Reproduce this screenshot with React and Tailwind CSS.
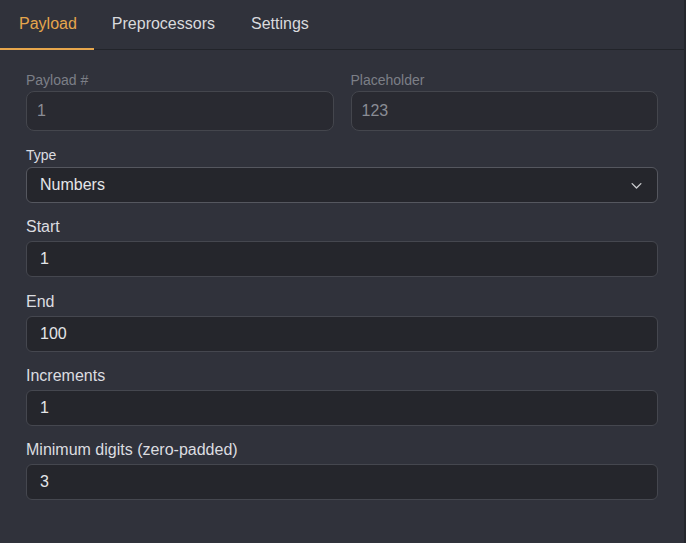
import { useState } from "react";

const tabs = ["Payload", "Preprocessors", "Settings"];

const Field = ({ label, value, gap = "mb-[14px]" }) => (
  <div className={gap}>
    <label className="block text-[16px] leading-5 text-[#dcdde0] mb-1">{label}</label>
    <div className="h-[36px] rounded-md border border-[#45474f] bg-[#25262c] px-[13px] flex items-center text-[16px] text-[#e4e5e8]">
      {value}
    </div>
  </div>
);

const App = () => {
  const [active, setActive] = useState("Payload");

  return (
    <div
      className="w-[686px] h-[543px] bg-[#30323b] border-r-2 border-[#25272d] overflow-hidden"
      style={{ fontFamily: '"Liberation Sans", Arial, sans-serif' }}
    >
      {/* Tabs */}
      <div className="flex border-b border-[#22242a] h-[50px]">
        {tabs.map((t) => (
          <button
            key={t}
            onClick={() => setActive(t)}
            className={
              active === t
                ? "pl-[19px] pr-[17px] text-[16px] text-[#e6a64c] border-b-2 border-[#e6a64c] -mb-px"
                : "px-[18px] text-[16px] text-[#d9dadd] border-b-2 border-transparent -mb-px"
            }
          >
            {t}
          </button>
        ))}
      </div>

      <div className="pl-[26px] pr-[26px] pt-[21px]">
        {/* Disabled row */}
        <div className="grid grid-cols-2 gap-[17px] mb-[15px]">
          <div>
            <label className="block text-[14px] leading-[18px] text-[#7c7f87] mb-[2px]">Payload #</label>
            <div className="h-[40px] rounded-lg border border-[#44464d] bg-[#292a31] px-[10px] flex items-center text-[16px] text-[#8a8d95]">
              1
            </div>
          </div>
          <div>
            <label className="block text-[14px] leading-[18px] text-[#7c7f87] mb-[2px]">Placeholder</label>
            <div className="h-[40px] rounded-lg border border-[#44464d] bg-[#292a31] px-[10px] flex items-center text-[16px] text-[#8a8d95]">
              123
            </div>
          </div>
        </div>

        {/* Type select */}
        <div className="mb-[14px]">
          <label className="block text-[14px] leading-[18px] text-[#dcdde0] mb-[3px]">Type</label>
          <div className="h-[36px] rounded-md border border-[#55575f] bg-[#25262c] px-[13px] flex items-center justify-between text-[16px] text-[#e4e5e8]">
            <span>Numbers</span>
            <svg width="15" height="15" viewBox="0 0 24 24" fill="none" stroke="#c9cacd" strokeWidth="2.2" strokeLinecap="round" strokeLinejoin="round">
              <path d="M5 9l7 7 7-7" />
            </svg>
          </div>
        </div>

        <Field label="Start" value="1" gap="mb-[15px]" />
        <Field label="End" value="100" />
        <Field label="Increments" value="1" />
        <Field label="Minimum digits (zero-padded)" value="3" />
      </div>
    </div>
  );
};

export default App;
